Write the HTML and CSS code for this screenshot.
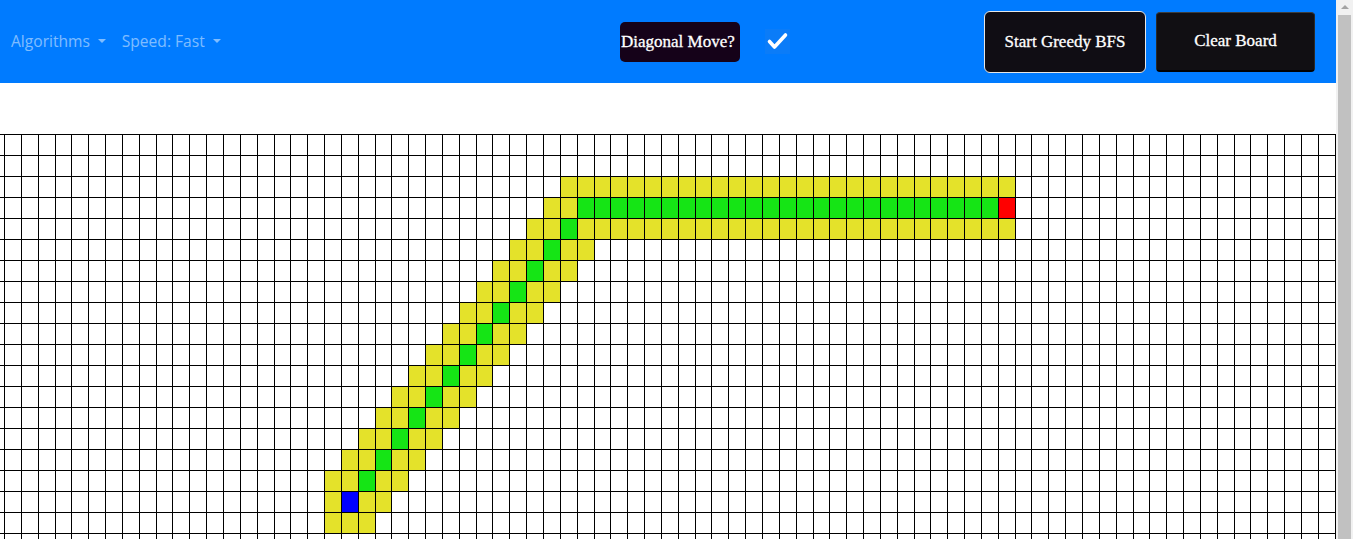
FILE: index.html
```html
<!DOCTYPE html>
<html lang="en">
<head>
<meta charset="utf-8">
<title>Pathfinding Visualizer</title>
<link rel="stylesheet" href="styles.css">
</head>
<body>
<div class="page">
  <nav class="navbar">
    <div class="nav-left">
      <a class="nav-link dropdown-toggle" href="#">Algorithms</a>
      <a class="nav-link dropdown-toggle" href="#">Speed: Fast</a>
    </div>
    <div class="nav-middle">
      <button class="btn-diagonal" type="button">Diagonal Move?</button>
      <span class="check">
        <svg viewBox="0 0 25 25" width="25" height="25" aria-hidden="true">
          <polyline points="4.5,12.5 9.5,18 20.5,6" fill="none" stroke="#fff" stroke-width="3.6" stroke-linecap="round" stroke-linejoin="round"/>
        </svg>
      </span>
    </div>
    <div class="nav-spacer"></div>
    <div class="nav-right">
      <button class="btn-start" type="button">Start Greedy BFS</button>
      <button class="btn-clear" type="button">Clear Board</button>
    </div>
  </nav>
  <main class="board-wrap">
    <div class="board" id="board"></div>
  </main>
</div>
<div class="scrollbar" aria-hidden="true">
  <div class="scroll-up"></div>
  <div class="scroll-thumb"></div>
</div>
<script src="script.js"></script>
</body>
</html>
```

FILE: styles.css
```css
* { box-sizing: border-box; }
html, body { margin: 0; padding: 0; }
body {
  background: #fff;
  overflow: hidden;
  font-family: "Open Sans", "Noto Sans", sans-serif;
}

.page {
  width: calc(100% - 17px);
  overflow: hidden;
}

/* classic window scrollbar on the right edge */
.scrollbar {
  position: fixed;
  top: 0;
  right: 0;
  bottom: 0;
  width: 17px;
  background: #f1f1f1;
  display: flex;
  flex-direction: column;
}
.scroll-up {
  height: 15px;
  display: flex;
  justify-content: center;
  padding-top: 5px;
}
.scroll-up::before {
  content: "";
  width: 0;
  height: 0;
  border-left: 4px solid transparent;
  border-right: 4px solid transparent;
  border-bottom: 4px solid #a3a3a3;
}
.scroll-thumb {
  flex: 1;
  margin: 0 2px;
  background: #c1c1c1;
}

.navbar {
  height: 83px;
  background: #007bff;
  display: grid;
  grid-template-columns: 620px auto 1fr auto;
  align-items: center;
  padding-right: 21px;
}

.nav-left {
  display: flex;
  align-items: center;
  padding-left: 3px;
}
.nav-link {
  color: rgba(255, 255, 255, 0.5);
  font-size: 15.6px;
  line-height: 24px;
  padding: 8px;
  margin-top: -2px;
  text-decoration: none;
}
.dropdown-toggle::after {
  content: "";
  display: inline-block;
  margin-left: 0.5em;
  vertical-align: 0.22em;
  border-top: 0.3em solid;
  border-right: 0.27em solid transparent;
  border-left: 0.27em solid transparent;
}

.nav-middle {
  display: flex;
  align-items: center;
}
.btn-diagonal {
  width: 120px;
  height: 40px;
  margin: 0;
  padding: 0 0 0 1px;
  text-align: left;
  background: #150219;
  color: #fff;
  border: 0;
  border-radius: 5px;
  font-family: "Liberation Serif", "Times New Roman", serif;
  font-size: 17px;
  white-space: nowrap;
  -webkit-text-stroke: 0.3px #fff;
}
.check {
  display: block;
  width: 25px;
  height: 25px;
  margin-left: 25px;
  margin-top: -1px;
  background: #0b7cf8;
}
.check svg { display: block; }

.nav-right {
  display: flex;
  align-items: center;
  gap: 10px;
}
.btn-start,
.btn-clear {
  margin: 0;
  padding: 0;
  color: #fff;
  font-family: "Liberation Serif", "Times New Roman", serif;
  font-size: 17px;
  white-space: nowrap;
  -webkit-text-stroke: 0.3px #fff;
}
.btn-start {
  width: 162px;
  height: 62px;
  background: #100d14;
  border: 1px solid #e6e6e6;
  border-radius: 6px;
}
.btn-clear {
  width: 159px;
  height: 60px;
  background: #110f13;
  border-style: solid;
  border-width: 1px 1px 2px 1px;
  border-color: #3d3d3d #2a2a2a #000 #2a2a2a;
  border-radius: 4px;
}

.board-wrap {
  margin-top: 51px;
  width: 100%;
  height: 408px;
  overflow: hidden;
}
.board {
  display: grid;
  grid-template-columns: repeat(80, 16.848px);
  grid-auto-rows: 21px;
  width: max-content;
  margin-left: -11.848px;
  border-top: 1px solid #000;
}
.cell {
  border-right: 1px solid #000;
  border-bottom: 1px solid #000;
  background: #fff;
}
.cell.visited { background: #e4e22a; }
.cell.path { background: #15e515; }
.cell.start { background: #0000ff; }
.cell.end { background: #ff0000; }
```

FILE: script.js
```js
(function () {
  var ROWS = 20, COLS = 80;
  var board = document.getElementById('board');
  var start = [17, 21];
  var end = [3, 60];
  var path = [];
  var r, c;
  for (r = 16; r >= 4; r--) path.push([r, 38 - r]);
  for (c = 35; c <= 59; c++) path.push([3, c]);

  function key(a, b) { return a + ',' + b; }
  var pathSet = {};
  path.forEach(function (p) { pathSet[key(p[0], p[1])] = true; });

  var visited = {};
  [start].concat(path).forEach(function (p) {
    for (var dr = -1; dr <= 1; dr++) {
      for (var dc = -1; dc <= 1; dc++) {
        visited[key(p[0] + dr, p[1] + dc)] = true;
      }
    }
  });

  var frag = document.createDocumentFragment();
  for (r = 0; r < ROWS; r++) {
    for (c = 0; c < COLS; c++) {
      var d = document.createElement('div');
      var k = key(r, c);
      var cls = 'cell';
      if (r === start[0] && c === start[1]) cls += ' start';
      else if (r === end[0] && c === end[1]) cls += ' end';
      else if (pathSet[k]) cls += ' path';
      else if (visited[k]) cls += ' visited';
      d.className = cls;
      frag.appendChild(d);
    }
  }
  board.appendChild(frag);
})();
```
